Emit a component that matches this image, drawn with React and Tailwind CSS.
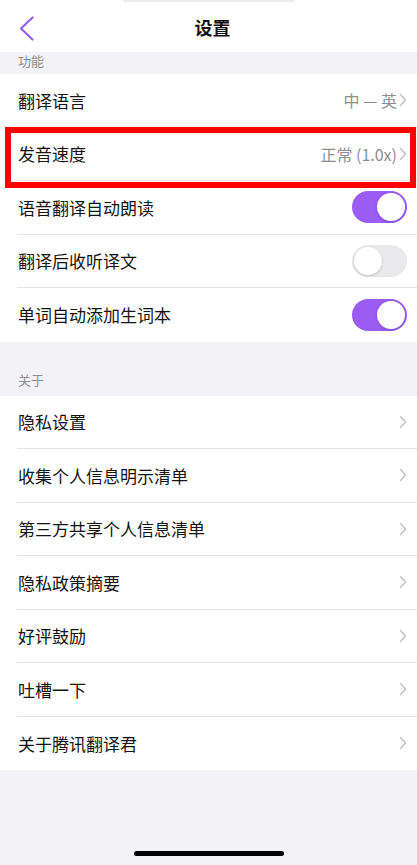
const font = { fontFamily: '"Noto Sans CJK SC", "Noto Sans", sans-serif' }

const funcRows = [
  { label: '翻译语言', value: '中 — 英' },
  { label: '发音速度', value: '正常 (1.0x)' },
  { label: '语音翻译自动朗读', toggle: true, on: true },
  { label: '翻译后收听译文', toggle: true, on: false },
  { label: '单词自动添加生词本', toggle: true, on: true },
]

const aboutRows = [
  '隐私设置',
  '收集个人信息明示清单',
  '第三方共享个人信息清单',
  '隐私政策摘要',
  '好评鼓励',
  '吐槽一下',
  '关于腾讯翻译君',
]

function Chevron() {
  return (
    <svg width="8" height="14" viewBox="0 0 8 14" className="flex-shrink-0">
      <path d="M1.5 1.5 L6.5 7 L1.5 12.5" fill="none" stroke="#c4c4c8" strokeWidth="1.6" strokeLinecap="round" strokeLinejoin="round" />
    </svg>
  )
}

function Toggle({ on }) {
  return (
    <div
      className={
        on
          ? 'w-[55px] h-[32px] rounded-full bg-[#9a5cf2] p-[2px] flex justify-end'
          : 'w-[55px] h-[32px] rounded-full bg-[#e9e9eb] p-[2px] flex justify-start'
      }
    >
      <div className="w-[28px] h-[28px] rounded-full bg-white shadow-[0_1px_3px_rgba(0,0,0,0.18)]" />
    </div>
  )
}

function Row({ label, last, children }) {
  return (
    <div className="h-[53.5px] pl-[17px] bg-white">
      <div className={`h-full flex items-center justify-between pr-[10px] ${last ? '' : 'border-b border-[#e4e4e6]'}`}>
        <span className="pl-[1px] text-[17px] text-[#141414]">{label}</span>
        {children}
      </div>
    </div>
  )
}

export default function App() {
  return (
    <div className="w-[417px] h-[865px] bg-[#f2f2f7] relative overflow-hidden flex flex-col" style={font}>
      {/* Header */}
      <header className="h-[52px] bg-white flex flex-col flex-shrink-0">
        <div className="flex justify-center">
          <div className="w-[172px] h-[2px] bg-[#ececec] rounded-b" />
        </div>
        <div className="flex-1 flex items-center relative">
          <svg width="16" height="26" viewBox="0 0 16 26" className="ml-[19px] mt-[3px]">
            <path d="M13.5 1.5 L2 12.5 L13.5 23.5" fill="none" stroke="#9160ee" strokeWidth="2.2" strokeLinecap="round" strokeLinejoin="round" />
          </svg>
          <span className="absolute left-0 right-0 pl-[8px] text-center text-[18px] font-semibold text-[#111] pointer-events-none">设置</span>
        </div>
      </header>

      {/* 功能 */}
      <div className="h-[22px] px-[18px] text-[13px] leading-[18px] text-[#8e8e93]">功能</div>
      <div>
        {funcRows.map((r, i) => (
          <Row key={r.label} label={r.label} last={i === funcRows.length - 1}>
            {r.toggle ? (
              <Toggle on={r.on} />
            ) : (
              <div className="flex items-center gap-[2px]">
                <span className="text-[16px] text-[#8e8e93]">{r.value}</span>
                <Chevron />
              </div>
            )}
          </Row>
        ))}
      </div>

      {/* 关于 */}
      <div className="h-[54px] px-[18px] flex items-end pb-[6px] text-[13px] text-[#8e8e93]">关于</div>
      <div>
        {aboutRows.map((label, i) => (
          <Row key={label} label={label} last={i === aboutRows.length - 1}>
            <Chevron />
          </Row>
        ))}
      </div>

      <div className="flex-1 flex items-end justify-center pb-[9px]">
        <div className="w-[150px] h-[5px] rounded-full bg-black" />
      </div>

      {/* highlight box */}
      <div className="absolute left-[5px] top-[127px] w-[411px] h-[61px] border-[6px] border-[#ff0000] pointer-events-none" />
    </div>
  )
}
